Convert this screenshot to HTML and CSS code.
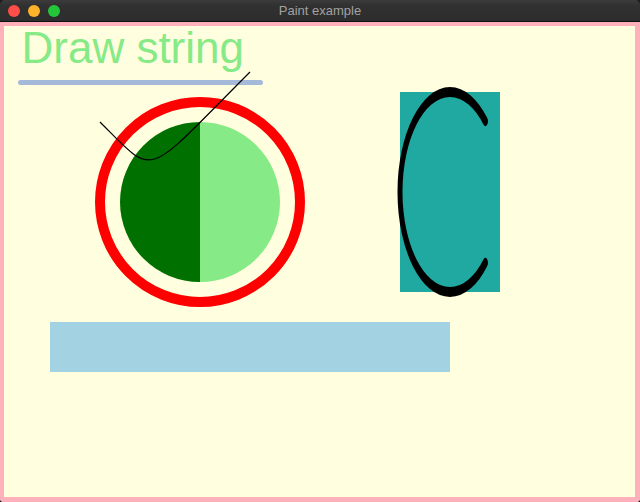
FILE: index.html
```html
<!DOCTYPE html>
<html>
<head>
<meta charset="utf-8">
<title>Paint example</title>
<link rel="stylesheet" href="styles.css">
</head>
<body>
<div class="window">
  <div class="titlebar">
    <div class="lights">
      <span class="light red"></span>
      <span class="light yellow"></span>
      <span class="light green"></span>
    </div>
    <div class="title">Paint example</div>
    <div class="spacer"></div>
  </div>
  <div class="canvas">
    <svg class="paint" width="640" height="480" viewBox="0 0 640 480" xmlns="http://www.w3.org/2000/svg">
      <rect class="frame" x="0" y="0" width="639" height="479"/>
      <text class="label" x="21.5" y="41">Draw string</text>
      <line class="underline" x1="20.5" y1="60.5" x2="260.5" y2="60.5"/>
      <circle class="ring" cx="200" cy="180" r="100"/>
      <path class="half-dark" d="M200,100 A80,80 0 0 0 200,260 Z"/>
      <path class="half-light" d="M200,100 A80,80 0 0 1 200,260 Z"/>
      <path class="curve" d="M100,100 C157,157 143,157 250,50"/>
      <rect class="teal" x="400" y="70" width="100" height="200"/>
      <g transform="translate(450,170) scale(1,2)">
        <path class="arc" d="M35.355,-35.355 A50,50 0 1 0 35.355,35.355"/>
      </g>
      <rect class="bar" x="50" y="300" width="400" height="50"/>
    </svg>
  </div>
</div>
</body>
</html>
```
FILE: styles.css
```css
html, body {
  margin: 0;
  padding: 0;
  background: #1c1c1c;
}
body {
  width: 640px;
  height: 502px;
  overflow: hidden;
}
.window {
  width: 640px;
  height: 502px;
  border-radius: 5px 5px 4px 4px;
  overflow: hidden;
  display: flex;
  flex-direction: column;
}
.titlebar {
  height: 22px;
  box-sizing: border-box;
  display: grid;
  grid-template-columns: 1fr auto 1fr;
  align-items: center;
  background: linear-gradient(#3b3b3b, #303030 30%, #2d2d2d);
  border-bottom: 1px solid #111;
  font-family: "Liberation Sans", Arial, sans-serif;
}
.lights {
  display: flex;
  gap: 8px;
  padding-left: 8px;
  align-items: center;
}
.light {
  width: 12px;
  height: 12px;
  border-radius: 50%;
  display: block;
}
.light.red { background: #fd4e4a; }
.light.yellow { background: #fdb22a; }
.light.green { background: #25c73a; }
.title {
  color: #a2a2a2;
  font-size: 13px;
  line-height: 21px;
}
.canvas {
  width: 640px;
  height: 480px;
  background: #ffffdf;
}
.paint {
  display: block;
}
.frame {
  fill: none;
  stroke: #ffb0bb;
  stroke-width: 8;
}
.label {
  font-family: "Liberation Sans", Arial, sans-serif;
  font-size: 44px;
  fill: #86ea86;
}
.underline {
  stroke: #a5bad9;
  stroke-width: 5;
  stroke-linecap: round;
}
.ring {
  fill: none;
  stroke: #ff0000;
  stroke-width: 10;
}
.half-dark { fill: #007100; }
.half-light { fill: #86ea86; }
.curve {
  fill: none;
  stroke: #000;
  stroke-width: 1.2;
}
.teal { fill: #1fa9a1; }
.arc {
  fill: none;
  stroke: #000;
  stroke-width: 5;
  stroke-linecap: round;
}
.bar { fill: #a3d2e3; }
```
